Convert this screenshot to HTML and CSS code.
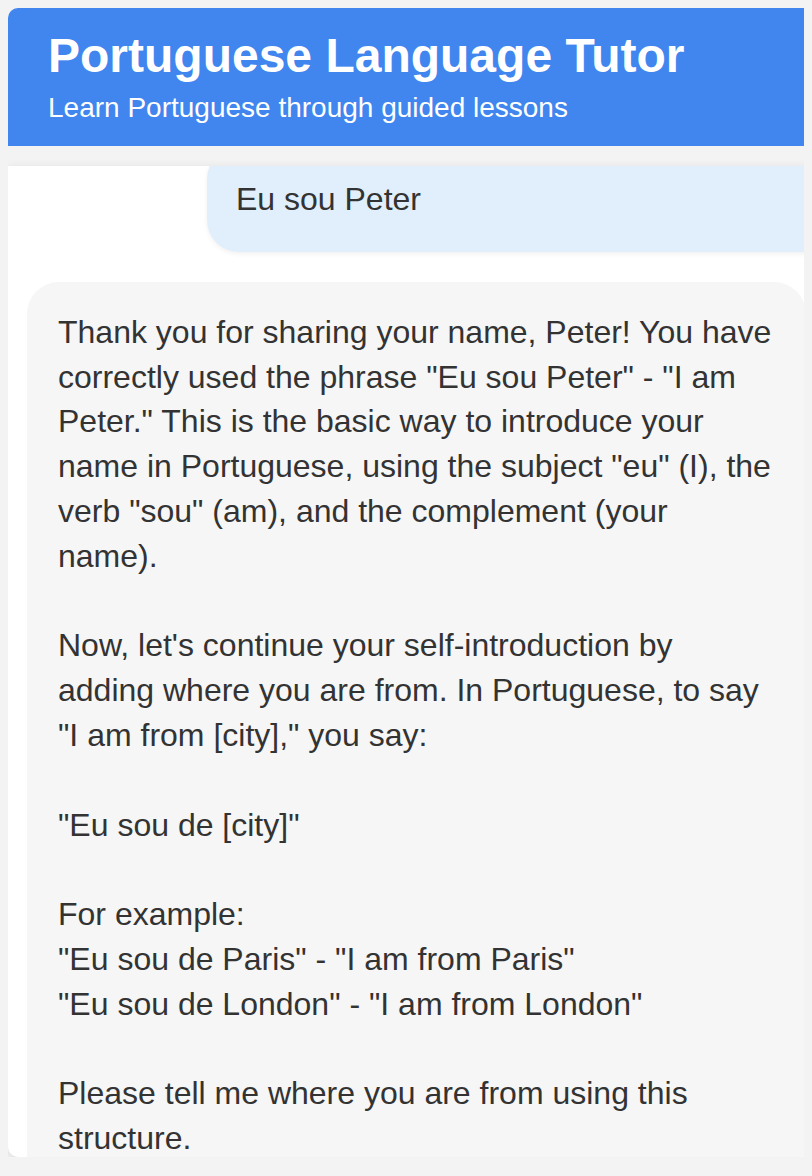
FILE: index.html
```html
<!DOCTYPE html>
<html lang="en">
<head>
<meta charset="utf-8">
<title>Portuguese Language Tutor</title>
<link rel="stylesheet" href="styles.css">
</head>
<body>
<div class="app">
  <header class="header">
    <h1 class="title">Portuguese Language Tutor</h1>
    <p class="subtitle">Learn Portuguese through guided lessons</p>
  </header>
  <main class="chat" id="chat">
    <div class="msg user">Eu sou Peter</div>
    <div class="msg assistant">Thank you for sharing your name, Peter! You have correctly used the phrase "Eu sou Peter" - "I am Peter." This is the basic way to introduce your name in Portuguese, using the subject "eu" (I), the verb "sou" (am), and the complement (your name).

Now, let's continue your self-introduction by adding where you are from. In Portuguese, to say "I am from [city]," you say:

"Eu sou de [city]"

For example:
"Eu sou de Paris" - "I am from Paris"
"Eu sou de London" - "I am from London"

Please tell me where you are from using this structure.

</div>
  </main>
</div>
<script src="script.js"></script>
</body>
</html>
```
FILE: styles.css
```css
html, body {
  overflow: hidden;
}
body {
  margin: 8px;
  background: #f3f3f3;
  font-family: "Liberation Sans", Arial, sans-serif;
  color: #333333;
}
.app {
  width: 1000px;
  display: flex;
  flex-direction: column;
  gap: 20px;
}
.header {
  background: #4086ee;
  color: #ffffff;
  padding: 20px 40px 21px;
  border-radius: 10px 10px 0 0;
  display: flex;
  flex-direction: column;
  gap: 7px;
}
.title {
  margin: 0;
  font-size: 48px;
  line-height: 56px;
  font-weight: bold;
}
.subtitle {
  margin: 0;
  font-size: 28px;
  line-height: 34px;
}
.chat {
  height: 991px;
  box-sizing: border-box;
  overflow: hidden;
  background: #ffffff;
  border-radius: 0 0 10px 10px;
  box-shadow: 0 2px 10px rgba(0, 0, 0, 0.1);
  padding: 20px 19px;
  display: flex;
  flex-direction: column;
  gap: 30px;
}
.msg {
  flex-shrink: 0;
  font-size: 32px;
  line-height: 1.4;
  white-space: pre-wrap;
  border-radius: 32px;
}
.user {
  margin-left: 180px;
  background: #e1effc;
  padding: 30px 30px 30px 29px;
  box-shadow: 0 2px 5px rgba(0, 0, 0, 0.06);
}
.assistant {
  margin-right: 183px;
  background: #f6f6f6;
  padding: 28px 34px 28px 31px;
}
```
FILE: script.js
```js
document.getElementById('chat').scrollTop = 39;
```
